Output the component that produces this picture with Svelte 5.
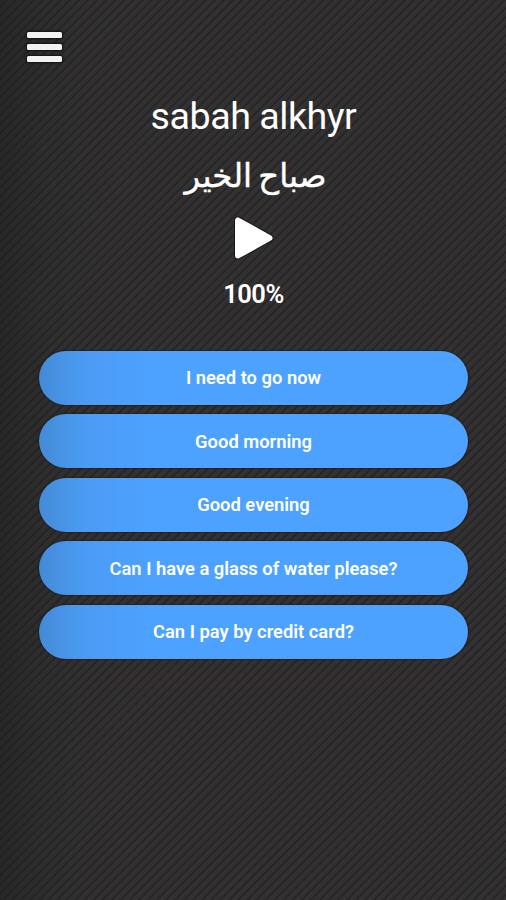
<script>
  const phrase = { latin: 'sabah alkhyr', arabic: 'صباح الخير' };
  const answers = [
    'I need to go now',
    'Good morning',
    'Good evening',
    'Can I have a glass of water please?',
    'Can I pay by credit card?'
  ];
  let score = 100;
  let selected = '';

  function choose(answer) {
    selected = answer;
  }
</script>

<main>
  <button class="menu" aria-label="Menu">
    <span></span>
    <span></span>
    <span></span>
  </button>

  <h1>{phrase.latin}</h1>
  <h2 lang="ar" dir="rtl">{phrase.arabic}</h2>

  <button class="play" aria-label="Play">
    <svg width="40" height="46" viewBox="0 0 40 46">
      <path d="M4 5.5 L4 40.5 L35.5 23 Z" fill="#fff" stroke="#181818" stroke-width="8" stroke-linejoin="round" />
      <path d="M4 5.5 L4 40.5 L35.5 23 Z" fill="#fff" stroke="#fff" stroke-width="6" stroke-linejoin="round" />
    </svg>
  </button>

  <p class="score">{score}%</p>

  <div class="answers">
    {#each answers as answer}
      <button class="answer" aria-pressed={selected === answer} on:click={() => choose(answer)}>{answer}</button>
    {/each}
  </div>
</main>

<style>
  :global(body) {
    background: #333132;
  }

  main {
    position: relative;
    box-sizing: border-box;
    height: 900px;
    padding: 31px 38px 0 39px;
    display: flex;
    flex-direction: column;
    align-items: center;
    overflow: hidden;
    color: #fff;
    font-family: Roboto, sans-serif;
    background: repeating-linear-gradient(135deg, #343233 0, #312f30 3.6px, #242324 4.7px, #272627 5.3px, #343233 6.4px);
  }

  /* shade along the left edge, lies over the buttons too */
  main::after {
    content: '';
    position: absolute;
    inset: 0;
    pointer-events: none;
    background: linear-gradient(90deg, rgba(24, 25, 25, 0.38) 0, rgba(28, 30, 28, 0.16) 45px, rgba(28, 30, 28, 0.05) 85px, transparent 150px);
  }

  button {
    border: 0;
    padding: 0;
    color: inherit;
    font-family: inherit;
    background: none;
    cursor: pointer;
  }

  .menu {
    align-self: flex-start;
    position: relative;
    z-index: 1;
    display: flex;
    flex-direction: column;
    gap: 6px;
    width: 35px;
    margin: 1px 0 0 -12px;
  }

  .menu span {
    height: 6px;
    border-radius: 1.5px;
    background: #f2f2f2;
    box-shadow: 0 0 2px 1px #111;
  }

  h1 {
    margin: 30px 0 0;
    font-size: 37.6px;
    font-weight: 400;
    line-height: 48px;
    letter-spacing: -0.45px;
  }

  h2 {
    margin: 12px 0 0;
    padding-left: 4px;
    height: 48px;
    font-family: 'DejaVu Sans', sans-serif;
    font-size: 32.4px;
    font-weight: 400;
    line-height: 48px;
    word-spacing: -4px;
    -webkit-text-stroke: 0.4px #fff;
  }

  .play {
    height: 46px;
    margin-top: 15px;
  }

  .play svg {
    display: block;
    overflow: visible;
  }

  .score {
    margin: 16px 0 0;
    font-size: 25.5px;
    font-weight: 600;
    line-height: 34px;
    letter-spacing: -0.5px;
  }

  .answers {
    align-self: stretch;
    display: flex;
    flex-direction: column;
    gap: 9.6px;
    margin-top: 39.5px;
  }

  .answer {
    height: 54px;
    border-radius: 27px;
    background: #4da2ff;
    box-shadow: 0 0 1px 1px rgba(34, 24, 16, 0.6);
    font-size: 18.35px;
    font-weight: 600;
  }
</style>
